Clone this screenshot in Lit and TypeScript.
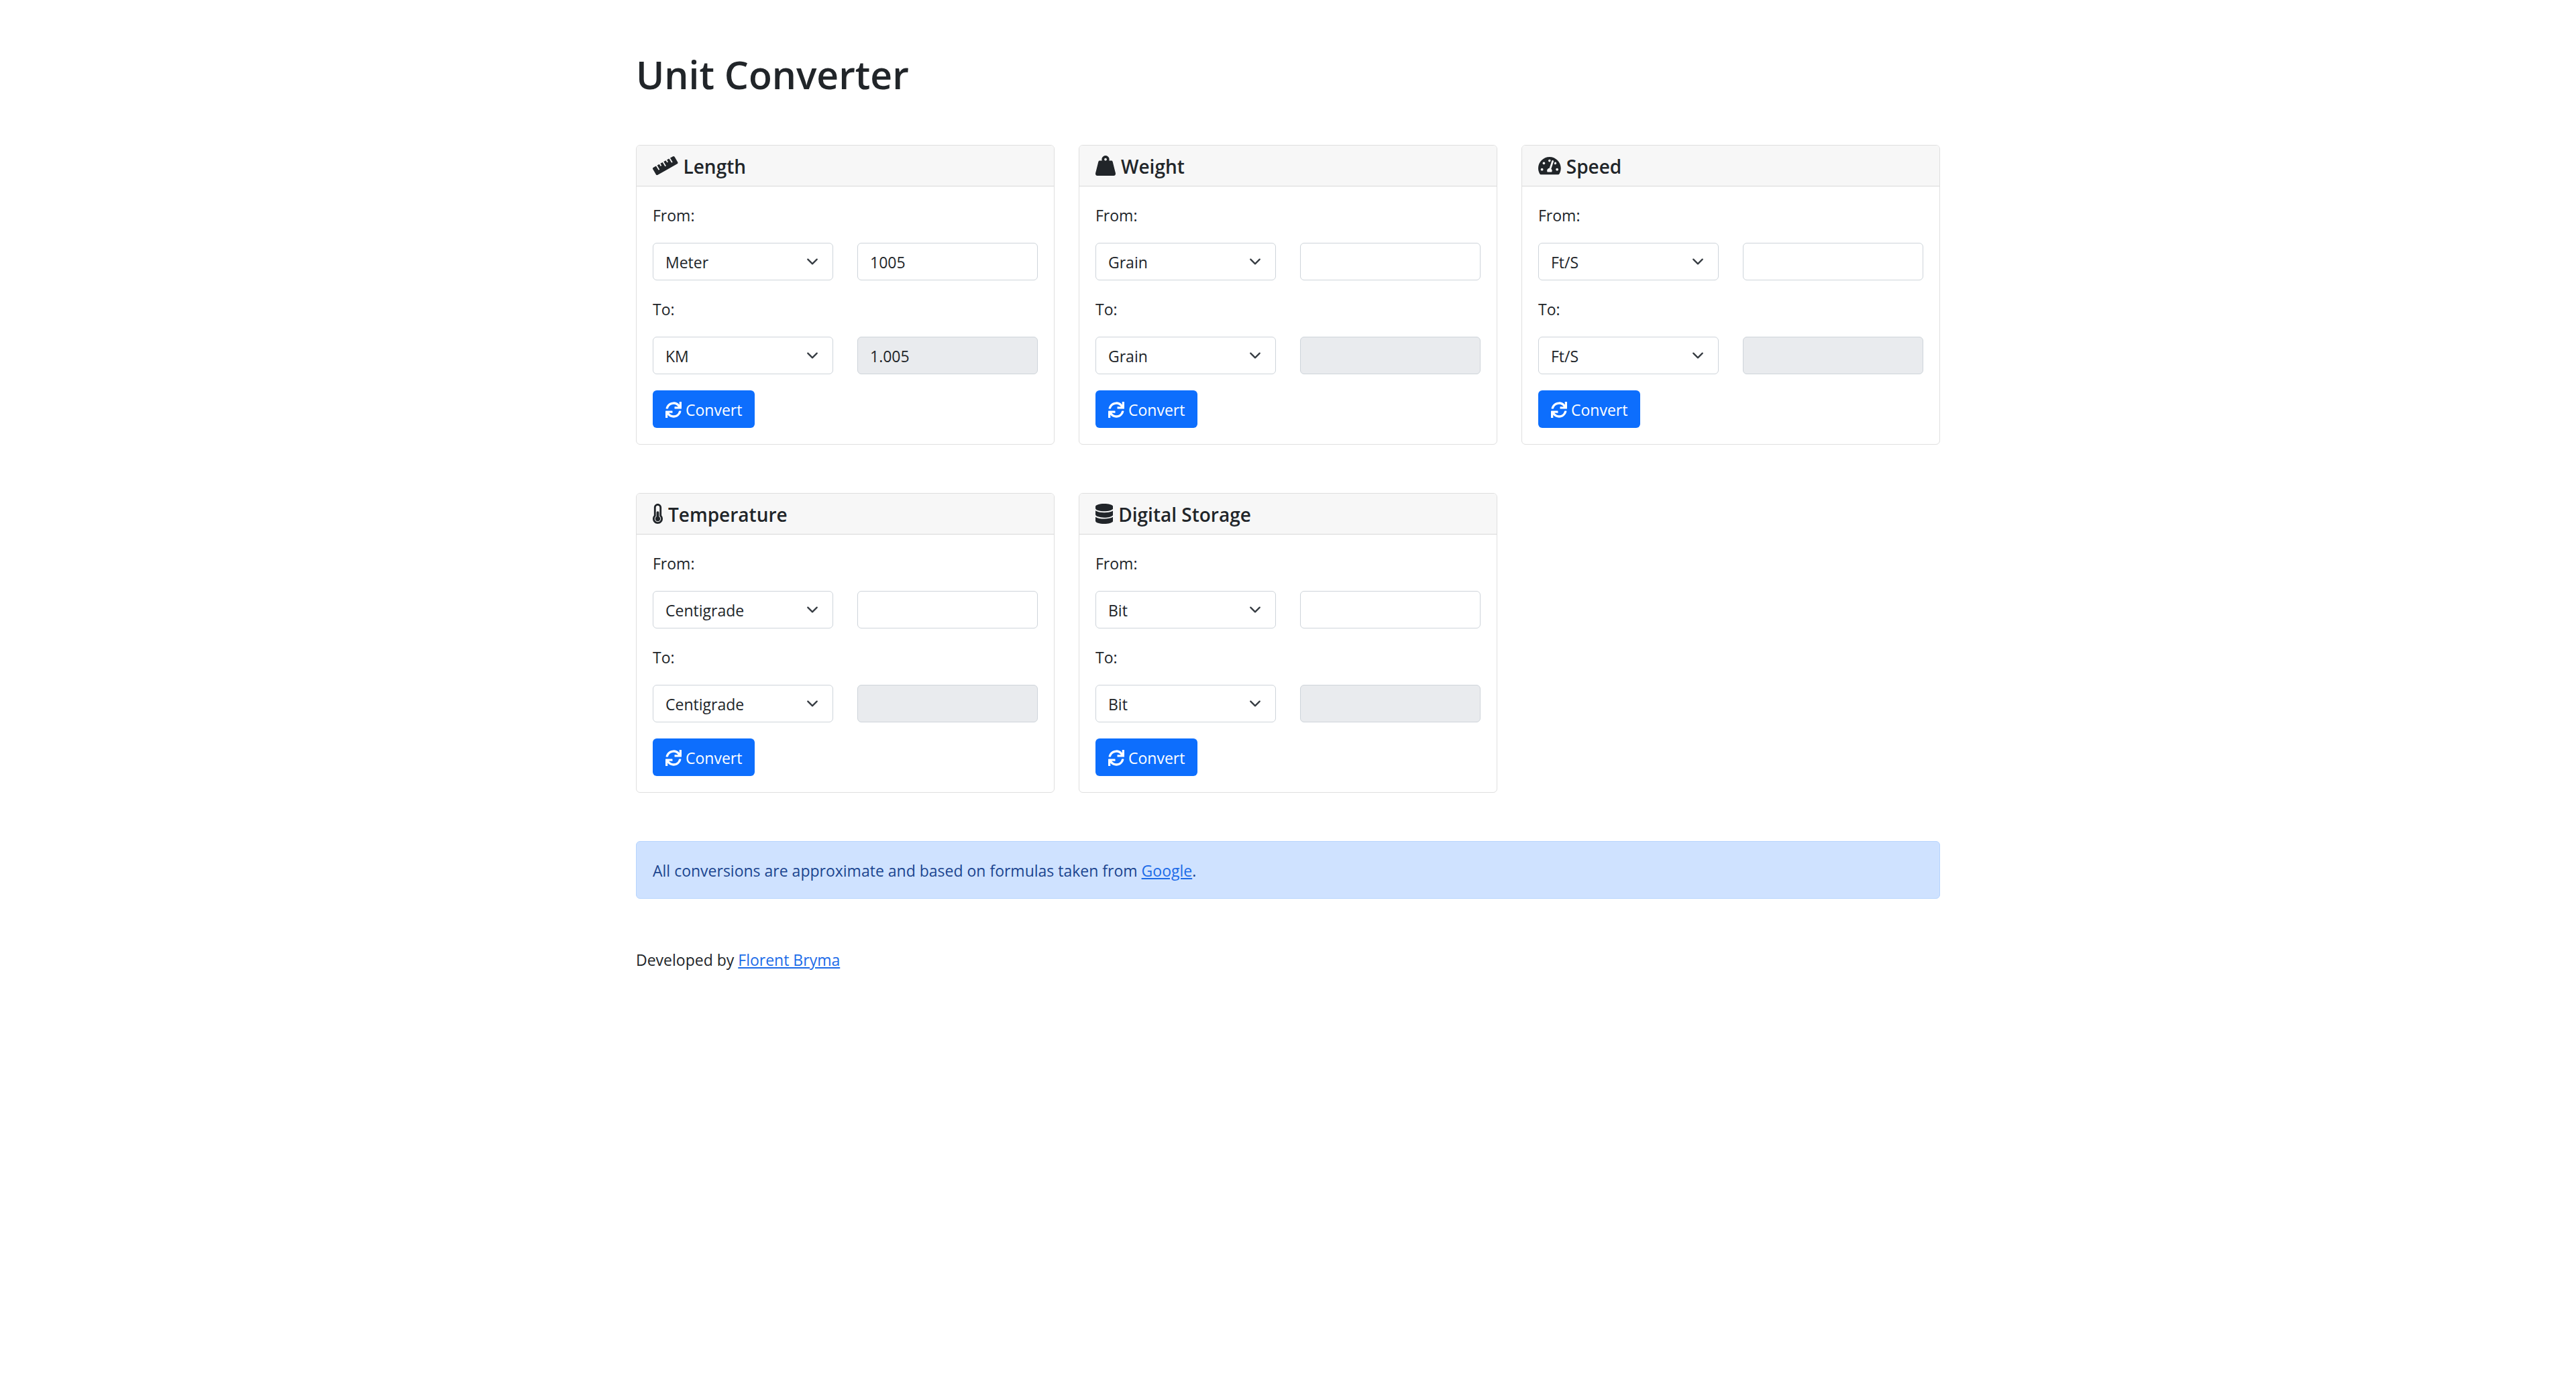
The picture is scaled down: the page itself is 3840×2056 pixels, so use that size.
import { LitElement, html, css, svg } from "lit";
import { customElement, property, state } from "lit/decorators.js";

interface Unit {
  name: string;
  /** Value of one unit expressed in the base unit of its kind. */
  factor: number;
  /** Added after scaling, for temperature scales. */
  offset?: number;
}

interface Kind {
  id: string;
  title: string;
  icon: string;
  units: Unit[];
  from?: string;
  to?: string;
  amount?: string;
}

const ICONS: Record<string, { width: number; path: string }> = {
  ruler: {
    width: 640,
    path: "M635.7 167.2L556.1 31.7c-8.8-15-28.3-20.1-43.5-11.5l-69 39.1L503.3 161c2.2 3.8.9 8.5-2.9 10.7l-13.8 7.8c-3.8 2.2-8.7.9-10.9-2.9L416 75l-55.2 31.3 27.9 47.4c2.2 3.8.9 8.5-2.9 10.7l-13.8 7.8c-3.8 2.2-8.7.9-10.9-2.9L333.2 122 278 153.3 337.8 255c2.2 3.7.9 8.5-2.9 10.7l-13.8 7.8c-3.8 2.2-8.7.9-10.9-2.9l-59.7-101.7-55.2 31.3 27.9 47.4c2.2 3.8.9 8.5-2.9 10.7l-13.8 7.8c-3.8 2.2-8.7.9-10.9-2.9l-27.9-47.5-55.2 31.3 59.7 101.7c2.2 3.7.9 8.5-2.9 10.7l-13.8 7.8c-3.8 2.2-8.7.9-10.9-2.9L84.9 262.9l-69 39.1C.7 310.7-4.6 329.8 4.2 344.8l79.6 135.6c8.8 15 28.3 20.1 43.5 11.5L624.1 210c15.2-8.6 20.4-27.8 11.6-42.8z",
  },
  weight: {
    width: 512,
    path: "M510.28 445.86l-73.03-292.13c-3.8-15.19-16.44-25.72-30.87-25.72h-60.25c3.57-10.05 5.88-20.72 5.88-32 0-53.02-42.98-96-96-96s-96 42.98-96 96c0 11.28 2.3 21.95 5.88 32h-60.25c-14.43 0-27.08 10.54-30.87 25.72L1.72 445.86C-6.61 479.17 16.38 512 48.03 512h415.95c31.64 0 54.63-32.83 46.3-66.14zM256 128c-17.64 0-32-14.36-32-32s14.36-32 32-32 32 14.36 32 32-14.36 32-32 32z",
  },
  gauge: {
    width: 576,
    path: "M288 32C128.94 32 0 160.94 0 320c0 52.8 14.25 102.26 39.06 144.8 5.61 9.62 16.3 15.2 27.44 15.2h443c11.14 0 21.83-5.58 27.44-15.2C561.75 422.26 576 372.8 576 320c0-159.06-128.94-288-288-288zm0 64c14.71 0 26.58 10.13 30.32 23.65-1.11 2.26-2.64 4.23-3.45 6.67l-9.22 27.67c-5.13 3.49-10.97 6.01-17.64 6.01-17.67 0-32-14.33-32-32S270.33 96 288 96zM96 384c-17.67 0-32-14.33-32-32s14.33-32 32-32 32 14.33 32 32-14.33 32-32 32zm48-160c-17.67 0-32-14.33-32-32s14.33-32 32-32 32 14.33 32 32-14.33 32-32 32zm246.77-72.41l-61.33 184C343.13 347.33 352 364.54 352 384c0 11.72-3.38 22.55-8.88 32H232.88c-5.5-9.45-8.88-20.28-8.88-32 0-33.94 26.5-61.43 59.9-63.59l61.34-184.01c4.17-12.56 17.73-19.45 30.36-15.17 12.57 4.19 19.35 17.79 15.17 30.36zm14.66 57.2l15.52-46.55c3.47-1.29 7.13-2.23 11.05-2.23 17.67 0 32 14.33 32 32s-14.33 32-32 32c-11.38-.01-20.89-6.28-26.57-15.22zM480 384c-17.67 0-32-14.33-32-32s14.33-32 32-32 32 14.33 32 32-14.33 32-32 32z",
  },
  thermometer: {
    width: 256,
    path: "M192 384c0 35.346-28.654 64-64 64s-64-28.654-64-64c0-23.685 12.876-44.349 32-55.417V224c0-17.673 14.327-32 32-32s32 14.327 32 32v104.583c19.124 11.068 32 31.732 32 55.417zm32-84.653c19.912 22.563 32 52.194 32 84.653 0 70.696-57.303 128-128 128-.299 0-.609-.001-.909-.003C56.789 511.509-.357 453.636.002 383.333.166 351.135 12.225 321.756 32 299.347V96c0-53.019 42.981-96 96-96s96 42.981 96 96v203.347zM208 384c0-34.339-19.37-52.19-32-66.502V96c0-26.467-21.533-48-48-48S80 69.533 80 96v221.498c-12.732 14.428-31.825 32.1-31.999 66.08-.224 43.876 35.563 80.116 79.423 80.42L128 464c44.112 0 80-35.888 80-80z",
  },
  database: {
    width: 448,
    path: "M448 73.143v45.714C448 159.143 347.667 192 224 192S0 159.143 0 118.857V73.143C0 32.857 100.333 0 224 0s224 32.857 224 73.143zM448 176v102.857C448 319.143 347.667 352 224 352S0 319.143 0 278.857V176c48.125 33.143 136.208 48.572 224 48.572S399.874 209.143 448 176zm0 160v102.857C448 479.143 347.667 512 224 512S0 479.143 0 438.857V336c48.125 33.143 136.208 48.572 224 48.572S399.874 369.143 448 336z",
  },
  sync: {
    width: 512,
    path: "M440.65 12.57l4 82.77A247.16 247.16 0 0 0 255.83 8C134.73 8 33.91 94.92 12.29 209.82A12 12 0 0 0 24.09 224h49.05a12 12 0 0 0 11.67-9.26 175.91 175.91 0 0 1 317-56.94l-101.46-4.86a12 12 0 0 0-12.57 12v47.41a12 12 0 0 0 12 12H500a12 12 0 0 0 12-12V12a12 12 0 0 0-12-12h-47.37a12 12 0 0 0-11.98 12.57zM255.83 432a175.61 175.61 0 0 1-146-77.8l101.8 4.87a12 12 0 0 0 12.57-12v-47.4a12 12 0 0 0-12-12H12a12 12 0 0 0-12 12V500a12 12 0 0 0 12 12h47.35a12 12 0 0 0 12-12.6l-4.15-82.57A247.17 247.17 0 0 0 255.83 504c121.11 0 221.93-86.92 243.55-201.82a12 12 0 0 0-11.8-14.18h-49.05a12 12 0 0 0-11.67 9.26A175.86 175.86 0 0 1 255.83 432z",
  },
};

const KINDS: Kind[] = [
  {
    id: "length",
    title: "Length",
    icon: "ruler",
    units: [
      { name: "Meter", factor: 1 },
      { name: "KM", factor: 1000 },
    ],
    from: "Meter",
    to: "KM",
    amount: "1005",
  },
  {
    id: "weight",
    title: "Weight",
    icon: "weight",
    units: [
      { name: "Grain", factor: 0.06479891 },
      { name: "Gram", factor: 1 },
      { name: "KG", factor: 1000 },
    ],
  },
  {
    id: "speed",
    title: "Speed",
    icon: "gauge",
    units: [
      { name: "Ft/S", factor: 0.3048 },
      { name: "M/S", factor: 1 },
    ],
  },
  {
    id: "temperature",
    title: "Temperature",
    icon: "thermometer",
    units: [
      { name: "Centigrade", factor: 1 },
      { name: "Fahrenheit", factor: 5 / 9, offset: -160 / 9 },
    ],
  },
  {
    id: "storage",
    title: "Digital Storage",
    icon: "database",
    units: [
      { name: "Bit", factor: 1 },
      { name: "Byte", factor: 8 },
    ],
  },
];

const icon = (name: string) => {
  const { width, path } = ICONS[name];
  return html`<svg class="icon" viewBox="0 0 ${width} 512" aria-hidden="true">
    ${svg`<path d=${path}></path>`}
  </svg>`;
};

@customElement("converter-card")
class ConverterCard extends LitElement {
  @property({ attribute: false }) kind!: Kind;
  @state() private result = "";

  static styles = css`
    :host {
      display: block;
    }
    .card {
      border: 1px solid #dfdfdf;
      border-radius: 6px;
      overflow: hidden;
      background: #fff;
    }
    .header {
      display: flex;
      align-items: center;
      gap: 8px;
      padding: 12px 24px;
      border-bottom: 1px solid #d8d8d8;
      background: #f7f7f7;
    }
    .title {
      margin: 0;
      padding-top: 2px;
      font-size: 28px;
      font-weight: 600;
      line-height: 34px;
    }
    .header .icon {
      height: 30px;
    }
    .icon {
      display: block;
      flex: none;
      height: 24px;
      fill: currentColor;
    }
    .body {
      display: grid;
      grid-template-columns: 1fr 1fr;
      gap: 24px 36px;
      padding: 24px;
    }
    .label {
      grid-column: 1 / -1;
      padding-top: 2px;
      line-height: 34px;
    }
    .picker {
      display: grid;
      align-items: center;
    }
    .picker > * {
      grid-area: 1 / 1;
    }
    .chevron {
      justify-self: end;
      width: 24px;
      height: 18px;
      margin-right: 19px;
      pointer-events: none;
      fill: none;
      stroke: #343a40;
      stroke-width: 2;
      stroke-linecap: round;
      stroke-linejoin: round;
    }
    .control {
      box-sizing: border-box;
      width: 100%;
      min-width: 0;
      height: 56px;
      margin: 0;
      padding: 10px 18px 8px;
      border: 1px solid #ced4da;
      border-radius: 6px;
      appearance: none;
      background: #fff;
      color: inherit;
      font: inherit;
    }
    .control:read-only:not(select) {
      background: #e9ebee;
    }
    .convert {
      display: flex;
      align-items: center;
      justify-self: start;
      gap: 6px;
      padding: 11px 19px 9px;
      border: 0;
      border-radius: 6px;
      background: #0d6efd;
      color: #fff;
      font: inherit;
      cursor: pointer;
    }
  `;

  firstUpdated() {
    this.convert();
  }

  private convert() {
    const root = this.renderRoot;
    const amount = root.querySelector<HTMLInputElement>("#amount")!.value;
    const unit = (id: string) => {
      const name = root.querySelector<HTMLSelectElement>(id)!.value;
      return this.kind.units.find((u) => u.name === name)!;
    };
    if (amount === "" || Number.isNaN(Number(amount))) {
      this.result = "";
      return;
    }
    const from = unit("#from");
    const to = unit("#to");
    const base = Number(amount) * from.factor + (from.offset ?? 0);
    this.result = String(Number(((base - (to.offset ?? 0)) / to.factor).toPrecision(10)));
  }

  private picker(id: string, selected?: string) {
    return html`<div class="picker">
      <select class="control" id=${id}>
        ${this.kind.units.map(
          (u) => html`<option value=${u.name} ?selected=${u.name === selected}>${u.name}</option>`,
        )}
      </select>
      <svg class="chevron" viewBox="0 0 16 16" aria-hidden="true"><path d="M2 5l6 6 6-6"></path></svg>
    </div>`;
  }

  render() {
    const { title, icon: name, from, to, amount } = this.kind;
    return html`<section class="card">
      <header class="header">
        ${icon(name)}
        <h2 class="title">${title}</h2>
      </header>
      <div class="body">
        <label class="label" for="from">From:</label>
        ${this.picker("from", from)}
        <input class="control" id="amount" type="text" aria-label="Amount" .value=${amount ?? ""} />
        <label class="label" for="to">To:</label>
        ${this.picker("to", to)}
        <input class="control" type="text" aria-label="Result" readonly .value=${this.result} />
        <button class="convert" type="button" @click=${this.convert}>${icon("sync")}<span>Convert</span></button>
      </div>
    </section>`;
  }
}

@customElement("app-root")
class AppRoot extends LitElement {
  static styles = css`
    :host {
      display: block;
      color: #212529;
      background: #fff;
      font: 23px/36px "Segoe UI", "Open Sans", "Noto Sans", sans-serif;
    }
    .page {
      box-sizing: border-box;
      max-width: 1980px;
      margin: 0 auto;
      padding: 78px 18px 72px;
      display: grid;
      gap: 72px;
    }
    .heading {
      margin: 0;
      font-size: 57px;
      font-weight: 600;
      line-height: 66px;
    }
    .cards {
      display: grid;
      grid-template-columns: repeat(auto-fill, minmax(540px, 1fr));
      gap: 72px 36px;
    }
    .notice {
      padding: 24px;
      border: 1px solid #b6d4fe;
      border-radius: 6px;
      background: #cfe2ff;
      color: #1b458f;
    }
    .text {
      margin: 0;
      padding-top: 2px;
      line-height: 34px;
    }
    .link {
      color: #1c6be8;
    }
  `;

  render() {
    return html`<main class="page">
      <h1 class="heading">Unit Converter</h1>
      <div class="cards">
        ${KINDS.map((kind) => html`<converter-card .kind=${kind}></converter-card>`)}
      </div>
      <div class="notice">
        <p class="text">
          All conversions are approximate and based on formulas taken from
          <a class="link" href="https://www.google.com">Google</a>.
        </p>
      </div>
      <p class="text">Developed by <a class="link" href="#">Florent Bryma</a></p>
    </main>`;
  }
}
